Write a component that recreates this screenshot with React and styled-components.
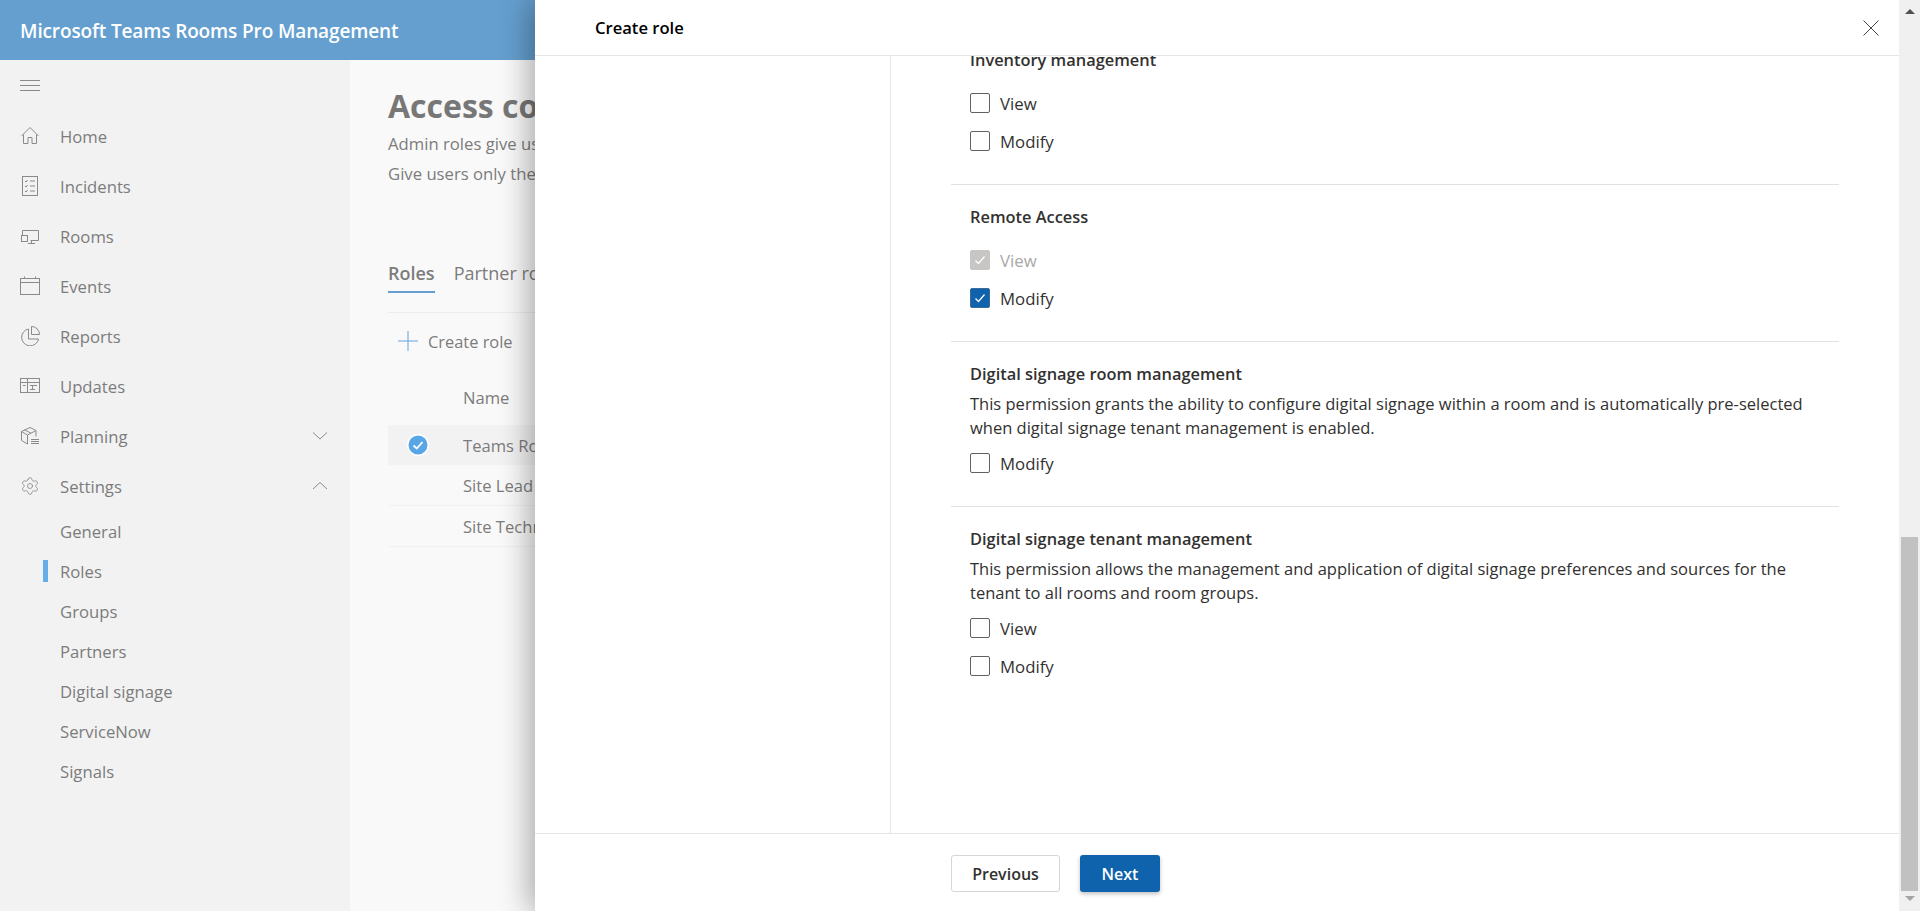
import React from 'react';
import styled, { createGlobalStyle } from 'styled-components';
import { Settings } from 'lucide-react';

const Global = createGlobalStyle`
  html, body { margin: 0; padding: 0; height: 100%; overflow: hidden; }
  body { font-family: "Open Sans", "Liberation Sans", sans-serif; }
  * { box-sizing: border-box; }
`;

const Shell = styled.div`display: flex; width: 1920px; height: 911px; overflow: hidden; background: #f9f9f9;`;
const Page = styled.div`position: relative; flex: 1; display: flex; flex-direction: column; min-width: 0;`;
const TopBar = styled.header`height: 60px; flex: none; background: #659fcf; color: #fff; display: flex; align-items: center; padding: 2px 0 0 20px; font-size: 19px; font-weight: 600; letter-spacing: -0.13px;`;
const Below = styled.div`flex: 1; display: flex; min-height: 0;`;

const Sidebar = styled.nav`width: 350px; flex: none; background: #f2f2f2; padding-top: 20px; color: #7c7c7c; font-size: 16.7px;`;
const Hamburger = styled.div`margin: 0 0 0 20px; height: 11px; width: 20px; border-top: 1px solid #8a8a8a; border-bottom: 1px solid #8a8a8a; &::after { content: ''; display: block; height: 1px; background: #8a8a8a; margin-top: 4px; }`;
const NavList = styled.div`margin-top: 20px; display: flex; flex-direction: column;`;
const NavItem = styled.div`height: 50px; display: flex; align-items: center; padding: 0 22px 0 20px; gap: 20px;`;
const NavIcon = styled.span`width: 20px; height: 20px; flex: none; display: flex; svg { display: block; }`;
const NavLabel = styled.span`flex: 1;`;
const SubList = styled.div`display: flex; flex-direction: column;`;
const SubItem = styled.div`position: relative; height: 40px; display: flex; align-items: center; padding-left: 60px; &::before { content: ''; display: ${p => (p.$active ? 'block' : 'none')}; position: absolute; left: 43px; top: 9px; width: 5px; height: 22px; background: #64ade6; }`;

const Main = styled.main`flex: 1; padding: 24px 0 0 38px; color: #7c7c7c; min-width: 0; overflow: hidden;`;
const Title = styled.h1`margin: 0; font-size: 32px; line-height: 44px; font-weight: 700; color: #777; white-space: nowrap;`;
const Intro = styled.p`margin: 0; font-size: 16.7px; line-height: 30px; white-space: nowrap; &:first-of-type { margin-top: 1px; }`;
const Tabs = styled.div`display: flex; gap: 19px; margin-top: 69px; font-size: 18px; height: 55px; border-bottom: 1px solid #ececec; align-items: flex-start;`;
const Tab = styled.div`height: 35px; line-height: 30px; white-space: nowrap; font-weight: ${p => (p.$active ? 600 : 400)}; border-bottom: 2px solid ${p => (p.$active ? '#659fcf' : 'transparent')};`;
const Command = styled.div`height: 56px; display: flex; align-items: center; padding-left: 10px; gap: 10px; font-size: 16.4px;`;
const TableHead = styled.div`height: 56px; padding: 0 0 0 75px; display: flex; align-items: center; font-size: 16.6px;`;
const Row = styled.div`height: ${p => (p.$first ? 40 : 41)}px; display: flex; align-items: center; padding-left: 75px; font-size: 16.6px; white-space: nowrap; position: relative; background: ${p => (p.$selected ? '#f2f2f2' : 'transparent')}; border-bottom: ${p => (p.$selected ? 0 : '1px solid #f1f1f1')};`;
const RowCheck = styled.span`position: absolute; left: 19px; top: 9px; display: flex;`;

const Panel = styled.aside`position: absolute; left: 535px; top: 0; right: 0; bottom: 0; background: #fff; display: flex; flex-direction: column; box-shadow: -6px 0 28px rgba(0, 0, 0, 0.32); color: #323130;`;
const PanelHead = styled.div`height: 56px; flex: none; display: flex; align-items: center; justify-content: space-between; border-bottom: 1px solid #e6e6e6; padding: 0 20px 0 60px; font-size: 16.6px; font-weight: 600; color: #000;`;
const PanelBody = styled.div`flex: 1; display: flex; min-height: 0;`;
const Steps = styled.div`width: 356px; flex: none; border-right: 1px solid #e6e6e6;`;
const ScrollArea = styled.div`flex: 1; overflow: hidden; padding: 0 60px 0 60px;`;
const Scrolled = styled.div`margin-top: -8px;`;
const Section = styled.section`padding: 0 0 33px 19px; & + & { border-top: 1px solid #e1e1e1; padding-top: 20px; }`;
const SectionTitle = styled.h3`margin: 0; font-size: 16.4px; line-height: 24px; font-weight: 600; color: #323130;`;
const Desc = styled.p`margin: 6px 0 0; font-size: 16.5px; line-height: 24px; color: #323130; max-width: 860px;`;
const Options = styled.div`margin-top: ${p => (p.$tight ? 13 : 21)}px; display: flex; flex-direction: column; gap: 18px;`;
const Option = styled.label`display: flex; align-items: center; gap: 10px; height: 20px; font-size: 16.8px; color: ${p => (p.$disabled ? '#a8a8a8' : '#323130')};`;
const Box = styled.span`width: 20px; height: 20px; flex: none; border-radius: 2px; display: flex; align-items: center; justify-content: center; border: 1px solid ${p => (p.$kind === 'on' ? '#3c6a99' : p.$kind === 'off' ? '#616161' : '#c8c6c4')}; background: ${p => (p.$kind === 'on' ? '#0f62ac' : p.$kind === 'off' ? '#fff' : '#c8c6c4')};`;
const PanelFoot = styled.div`height: 78px; flex: none; border-top: 1px solid #e6e6e6; padding: 21px 0 0 416px; display: flex; gap: 20px; align-items: flex-start;`;
const Secondary = styled.button`width: 109px; height: 37px; background: #fff; border: 1px solid #d6d6d6; border-radius: 3px; font: 600 16px "Open Sans", sans-serif; color: #323130; padding: 0;`;
const Primary = styled.button`width: 80px; height: 37px; background: #0f62ac; border: 0; border-radius: 3px; font: 600 16px "Open Sans", sans-serif; color: #fff; box-shadow: 0 2px 4px rgba(0,0,0,.25); padding: 0;`;

const Track = styled.div`width: 21px; flex: none; background: #f0f0f0; display: flex; flex-direction: column; align-items: center; padding-top: 9px; position: relative; z-index: 2;`;
const ArrowUp = styled.span`width: 0; height: 0; border-left: 5px solid transparent; border-right: 5px solid transparent; border-bottom: 5px solid #505050;`;
const Thumb = styled.div`width: 17px; height: 354px; background: #c1c1c1; margin-top: 523px;`;
const ArrowDown = styled.span`width: 0; height: 0; border-left: 5px solid transparent; border-right: 5px solid transparent; border-top: 5px solid #a3a3a3; margin-top: 5px;`;

const Svg = ({ children, size = 20, color = '#8a8a8a' }) => (
  <svg width={size} height={size} viewBox="0 0 20 20" fill="none" stroke={color} strokeWidth="1">{children}</svg>
);
const icons = {
  home: <Svg><path d="M1.5 10 10 1.5l8.5 8.5M3.5 8.5v9h4.5v-6h4v6h4.5v-9" /></Svg>,
  incidents: <Svg><rect x="2.5" y="0.5" width="15" height="19" /><path d="M5 5l1 1 1.6-2M10 5h5M5 10l1 1 1.6-2M10 10h5M5 15l1 1 1.6-2M10 15h5" /></Svg>,
  rooms: <Svg><path d="M2.5 9V4.5h16v10h-8M8 17.5h7M11.5 14.5v3" /><rect x="1.5" y="9.5" width="6" height="6" /></Svg>,
  events: <Svg><rect x="0.5" y="2.5" width="19" height="16" /><path d="M0.5 6.5h19M4.5 0.5v2M15.5 0.5v2" /></Svg>,
  reports: <Svg><path d="M8.5 3a8.5 8.5 0 1 0 10 10h-10z" /><path d="M11.5 0.5a8 8 0 0 1 8 8h-8z" /></Svg>,
  updates: <Svg><rect x="0.5" y="2.5" width="19" height="14" /><path d="M0.5 6.5h19M7.5 2.5v14M3 9.5h2.5M10 9.5h7M10 13.5h5M12.5 9.5v4" /></Svg>,
  planning: <Svg><path d="M1.5 5.5 10 1.5l6 3v6M1.5 5.5v9l6 3.5v-9zM7.5 9 16 4.5M4.5 3.8l6.5 3.4" /><path d="M11 13.5h8M11 15.5h8M11 17.5h8" /></Svg>,
};

const Chevron = ({ up }) => (
  <svg width="16" height="10" viewBox="0 0 16 10" fill="none" stroke="#8a8a8a" strokeWidth="1">
    <path d={up ? 'M1 8 8 1.5 15 8' : 'M1 1.5 8 8l7-6.5'} />
  </svg>
);

const Check = ({ color = '#fff' }) => (
  <svg width="14" height="14" viewBox="0 0 14 14" fill="none" stroke={color} strokeWidth="1.2"><path d="M2.5 7.5 5.5 10.5 11.5 3.5" /></svg>
);

const Check2 = ({ kind, label }) => (
  <Option $disabled={kind === 'dis'}>
    <Box $kind={kind}>{kind !== 'off' && <Check />}</Box>
    {label}
  </Option>
);

const nav = [
  ['home', 'Home'], ['incidents', 'Incidents'], ['rooms', 'Rooms'], ['events', 'Events'],
  ['reports', 'Reports'], ['updates', 'Updates'],
];
const subs = ['General', 'Roles', 'Groups', 'Partners', 'Digital signage', 'ServiceNow', 'Signals'];

export default function App() {
  return (
    <Shell>
      <Global />
      <Page>
        <TopBar>Microsoft Teams Rooms Pro Management</TopBar>
        <Below>
          <Sidebar>
            <Hamburger />
            <NavList>
              {nav.map(([k, l]) => (
                <NavItem key={k}><NavIcon>{icons[k]}</NavIcon><NavLabel>{l}</NavLabel></NavItem>
              ))}
              <NavItem><NavIcon>{icons.planning}</NavIcon><NavLabel>Planning</NavLabel><Chevron /></NavItem>
              <NavItem><NavIcon><Settings size={20} strokeWidth={1} color="#8a8a8a" /></NavIcon><NavLabel>Settings</NavLabel><Chevron up /></NavItem>
              <SubList>
                {subs.map(s => <SubItem key={s} $active={s === 'Roles'}>{s}</SubItem>)}
              </SubList>
            </NavList>
          </Sidebar>
          <Main>
            <Title>Access control</Title>
            <Intro>Admin roles give users access to features.</Intro>
            <Intro>Give users only the access they need.</Intro>
            <Tabs><Tab $active>Roles</Tab><Tab>Partner roles</Tab></Tabs>
            <Command>
              <svg width="20" height="20" viewBox="0 0 20 20" stroke="#64a3d8" strokeWidth="1" fill="none"><path d="M10 0v20M0 10h20" /></svg>
              Create role
            </Command>
            <TableHead>Name</TableHead>
            <Row $selected $first>
              <RowCheck>
                <svg width="22" height="22" viewBox="0 0 22 22"><circle cx="11" cy="11" r="11" fill="#fff" /><circle cx="11" cy="11" r="9.5" fill="#58a6e6" /><path d="M6.5 11.5 9.8 14.5 15.5 8" fill="none" stroke="#fff" strokeWidth="1.8" /></svg>
              </RowCheck>
              Teams Rooms Pro Manager
            </Row>
            <Row>Site Lead</Row>
            <Row>Site Technician</Row>
          </Main>
        </Below>
        <Panel>
          <PanelHead>
            Create role
            <svg width="16" height="16" viewBox="0 0 16 16" stroke="#444" strokeWidth="1" fill="none"><path d="M0.5 0.5l15 15M15.5 0.5l-15 15" /></svg>
          </PanelHead>
          <PanelBody>
            <Steps />
            <ScrollArea>
              <Scrolled>
                <Section>
                  <SectionTitle>Inventory management</SectionTitle>
                  <Options><Check2 kind="off" label="View" /><Check2 kind="off" label="Modify" /></Options>
                </Section>
                <Section>
                  <SectionTitle>Remote Access</SectionTitle>
                  <Options><Check2 kind="dis" label="View" /><Check2 kind="on" label="Modify" /></Options>
                </Section>
                <Section>
                  <SectionTitle>Digital signage room management</SectionTitle>
                  <Desc>This permission grants the ability to configure digital signage within a room and is automatically pre-selected when digital signage tenant management is enabled.</Desc>
                  <Options $tight><Check2 kind="off" label="Modify" /></Options>
                </Section>
                <Section>
                  <SectionTitle>Digital signage tenant management</SectionTitle>
                  <Desc>This permission allows the management and application of digital signage preferences and sources for the tenant to all rooms and room groups.</Desc>
                  <Options $tight><Check2 kind="off" label="View" /><Check2 kind="off" label="Modify" /></Options>
                </Section>
              </Scrolled>
            </ScrollArea>
          </PanelBody>
          <PanelFoot>
            <Secondary>Previous</Secondary>
            <Primary>Next</Primary>
          </PanelFoot>
        </Panel>
      </Page>
      <Track>
        <ArrowUp />
        <Thumb />
        <ArrowDown />
      </Track>
    </Shell>
  );
}
